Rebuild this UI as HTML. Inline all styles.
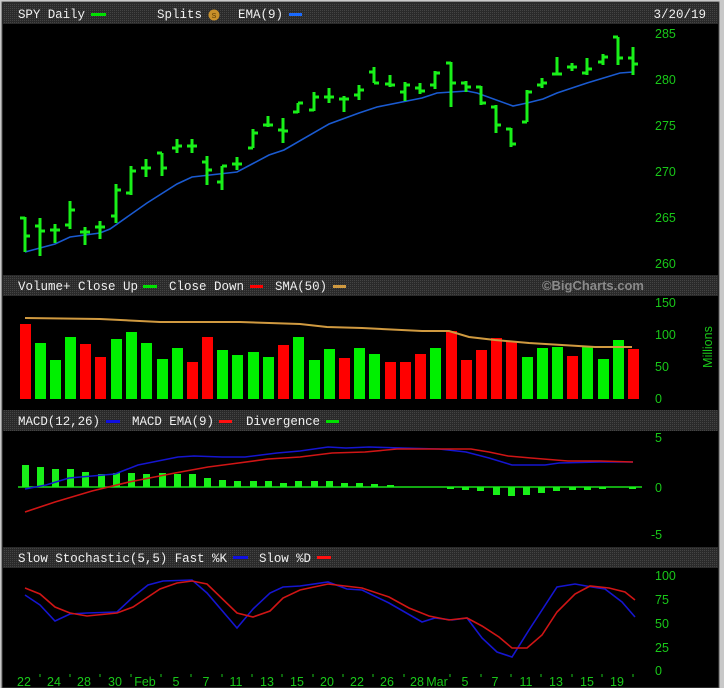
<!DOCTYPE html>
<html><head><meta charset="utf-8"><style>
html,body{margin:0;padding:0;background:#c8c8c8;width:724px;height:688px;overflow:hidden}
svg{display:block}
.h{font-family:"Liberation Mono",monospace;font-size:12.5px;fill:#f0f0f0}
.a{font-family:"Liberation Sans",sans-serif;font-size:12.5px;fill:#19c819}
</style></head><body>
<svg width="724" height="688" viewBox="0 0 724 688" xmlns="http://www.w3.org/2000/svg">
<defs><pattern id="dots" width="2" height="2" patternUnits="userSpaceOnUse"><rect width="2" height="2" fill="#2a2a2a"/><rect width="1" height="1" fill="#444"/></pattern></defs>
<rect x="0" y="0" width="724" height="688" fill="#c8c8c8"/>
<rect x="2" y="2" width="717" height="686" fill="#000"/>
<rect x="2" y="2" width="717" height="686" fill="none" stroke="#555" stroke-width="1"/>
<rect x="3" y="3" width="715" height="21" fill="url(#dots)"/>
<rect x="3" y="275" width="715" height="21" fill="url(#dots)"/>
<rect x="3" y="410" width="715" height="21" fill="url(#dots)"/>
<rect x="3" y="547" width="715" height="21" fill="url(#dots)"/>

<text class="h" x="18" y="18" textLength="67">SPY Daily</text>
<rect x="91" y="13" width="15" height="3" fill="#00e000"/>
<text class="h" x="157" y="18" textLength="45">Splits</text>
<circle cx="214" cy="15" r="5.5" fill="#c8902a"/>
<text x="214" y="18" font-family="Liberation Sans" font-size="7" fill="#5a3a00" text-anchor="middle">S</text>
<text class="h" x="238" y="18" textLength="45">EMA(9)</text>
<rect x="289" y="13" width="13" height="3" fill="#1a6aff"/>
<text class="h" x="706" y="18" text-anchor="end">3/20/19</text>

<text class="h" x="18" y="290" textLength="120">Volume+ Close Up</text>
<rect x="143" y="285" width="14" height="3" fill="#00e000"/>
<text class="h" x="169" y="290" textLength="75">Close Down</text>
<rect x="250" y="285" width="13" height="3" fill="#ff0000"/>
<text class="h" x="275" y="290" textLength="52">SMA(50)</text>
<rect x="333" y="285" width="13" height="3" fill="#d09a40"/>
<text x="644" y="290" text-anchor="end" font-family="Liberation Sans" font-weight="bold" font-size="13" fill="#8a8a8a">©BigCharts.com</text>

<text class="h" x="18" y="425" textLength="82">MACD(12,26)</text>
<rect x="106" y="420" width="14" height="3" fill="#1010e0"/>
<text class="h" x="132" y="425" textLength="82">MACD EMA(9)</text>
<rect x="219" y="420" width="13" height="3" fill="#ff1010"/>
<text class="h" x="246" y="425" textLength="74">Divergence</text>
<rect x="326" y="420" width="13" height="3" fill="#00e000"/>

<text class="h" x="18" y="562" textLength="209">Slow Stochastic(5,5) Fast %K</text>
<rect x="233" y="556" width="15" height="3" fill="#1010e0"/>
<text class="h" x="259" y="562" textLength="52">Slow %D</text>
<rect x="317" y="556" width="14" height="3" fill="#ff1010"/>

<text class="a" x="655" y="38">285</text>
<text class="a" x="655" y="84">280</text>
<text class="a" x="655" y="130">275</text>
<text class="a" x="655" y="176">270</text>
<text class="a" x="655" y="222">265</text>
<text class="a" x="655" y="268">260</text>

<polyline fill="none" stroke="#1a5ad0" stroke-width="1.6" points="25,252 55,244 70,237 100,233 110,229 147,203 177,184 192,177 237,172 269,155 284,150 329,124 359,113 377,107 422,98 437,93 467,91 477,93 513,106 527,103 543,99 557,93 587,83 620,73 633,72"/>
<g stroke="#19f019" stroke-width="3" fill="none">
<path d="M25 217V252M20 218H25M25 236H30"/>
<path d="M40 218V256M35 226H40M40 231H45"/>
<path d="M55 224V243M50 230H55M55 230H60"/>
<path d="M70 201V229M65 225H70M70 210H75"/>
<path d="M85 227V245M80 232H85M85 232H90"/>
<path d="M100 221V239M95 227H100M100 227H105"/>
<path d="M116 184V223M111 216H116M116 190H121"/>
<path d="M131 166V195M126 193H131M131 171H136"/>
<path d="M146 159V177M141 168H146M146 168H151"/>
<path d="M162 153V176M157 153H162M162 168H167"/>
<path d="M177 139V153M172 148H177M177 146H182"/>
<path d="M192 139V153M187 146H192M192 146H197"/>
<path d="M207 156V185M202 162H207M207 170H212"/>
<path d="M222 166V190M217 182H222M222 166H227"/>
<path d="M237 157V170M232 164H237M237 164H242"/>
<path d="M253 129V148M248 148H253M253 133H258"/>
<path d="M268 116V127M263 125H268M268 125H273"/>
<path d="M283 118V143M278 130H283M283 131H288"/>
<path d="M298 103V113M293 112H298M298 103H303"/>
<path d="M314 92V111M309 110H314M314 97H319"/>
<path d="M329 88V103M324 97H329M329 97H334"/>
<path d="M344 96V112M339 99H344M344 99H349"/>
<path d="M359 85V100M354 95H359M359 90H364"/>
<path d="M374 67V83M369 72H374M374 83H379"/>
<path d="M390 75V87M385 84H390M390 85H395"/>
<path d="M405 82V101M400 92H405M405 85H410"/>
<path d="M420 83V94M415 88H420M420 91H425"/>
<path d="M435 71V89M430 85H435M435 73H440"/>
<path d="M451 62V107M446 63H451M451 83H456"/>
<path d="M466 81V92M461 83H466M466 87H471"/>
<path d="M481 86V105M476 87H481M481 103H486"/>
<path d="M496 105V133M491 107H496M496 125H501"/>
<path d="M511 128V147M506 129H511M511 144H516"/>
<path d="M527 90V122M522 122H527M527 92H532"/>
<path d="M542 78V88M537 85H542M542 83H547"/>
<path d="M557 57V75M552 74H557M557 74H562"/>
<path d="M572 63V71M567 67H572M572 67H577"/>
<path d="M587 58V75M582 73H587M587 69H592"/>
<path d="M603 54V65M598 62H603M603 57H608"/>
<path d="M618 37V65M613 37H618M618 58H623"/>
<path d="M633 47V75M628 58H633M633 64H638"/>
</g>

<text class="a" x="655" y="307">150</text>
<text class="a" x="655" y="339">100</text>
<text class="a" x="655" y="371">50</text>
<text class="a" x="655" y="403">0</text>
<text class="a" transform="translate(712,347) rotate(-90)" text-anchor="middle" font-size="11.5">Millions</text>
<g>
<rect x="20" y="324" width="11" height="75" fill="#ff0000"/>
<rect x="35" y="343" width="11" height="56" fill="#00f000"/>
<rect x="50" y="360" width="11" height="39" fill="#00f000"/>
<rect x="65" y="337" width="11" height="62" fill="#00f000"/>
<rect x="80" y="344" width="11" height="55" fill="#ff0000"/>
<rect x="95" y="357" width="11" height="42" fill="#ff0000"/>
<rect x="111" y="339" width="11" height="60" fill="#00f000"/>
<rect x="126" y="332" width="11" height="67" fill="#00f000"/>
<rect x="141" y="343" width="11" height="56" fill="#00f000"/>
<rect x="157" y="359" width="11" height="40" fill="#00f000"/>
<rect x="172" y="348" width="11" height="51" fill="#00f000"/>
<rect x="187" y="362" width="11" height="37" fill="#ff0000"/>
<rect x="202" y="337" width="11" height="62" fill="#ff0000"/>
<rect x="217" y="350" width="11" height="49" fill="#00f000"/>
<rect x="232" y="355" width="11" height="44" fill="#00f000"/>
<rect x="248" y="352" width="11" height="47" fill="#00f000"/>
<rect x="263" y="357" width="11" height="42" fill="#00f000"/>
<rect x="278" y="345" width="11" height="54" fill="#ff0000"/>
<rect x="293" y="337" width="11" height="62" fill="#00f000"/>
<rect x="309" y="360" width="11" height="39" fill="#00f000"/>
<rect x="324" y="349" width="11" height="50" fill="#00f000"/>
<rect x="339" y="358" width="11" height="41" fill="#ff0000"/>
<rect x="354" y="348" width="11" height="51" fill="#00f000"/>
<rect x="369" y="354" width="11" height="45" fill="#00f000"/>
<rect x="385" y="362" width="11" height="37" fill="#ff0000"/>
<rect x="400" y="362" width="11" height="37" fill="#ff0000"/>
<rect x="415" y="354" width="11" height="45" fill="#ff0000"/>
<rect x="430" y="348" width="11" height="51" fill="#00f000"/>
<rect x="446" y="331" width="11" height="68" fill="#ff0000"/>
<rect x="461" y="360" width="11" height="39" fill="#ff0000"/>
<rect x="476" y="350" width="11" height="49" fill="#ff0000"/>
<rect x="491" y="338" width="11" height="61" fill="#ff0000"/>
<rect x="506" y="342" width="11" height="57" fill="#ff0000"/>
<rect x="522" y="357" width="11" height="42" fill="#00f000"/>
<rect x="537" y="348" width="11" height="51" fill="#00f000"/>
<rect x="552" y="347" width="11" height="52" fill="#00f000"/>
<rect x="567" y="356" width="11" height="43" fill="#ff0000"/>
<rect x="582" y="346" width="11" height="53" fill="#00f000"/>
<rect x="598" y="359" width="11" height="40" fill="#00f000"/>
<rect x="613" y="340" width="11" height="59" fill="#00f000"/>
<rect x="628" y="349" width="11" height="50" fill="#ff0000"/>
</g>
<polyline fill="none" stroke="#d09a40" stroke-width="2" points="25,318 100,319 160,322 240,322 300,324 327,327 362,328 422,331 449,331 469,337 495,340 529,343 562,345 595,347 632,347"/>

<text class="a" x="655" y="442">5</text>
<text class="a" x="655" y="492">0</text>
<text class="a" x="651" y="539">-5</text>
<line x1="18" y1="487" x2="642" y2="487" stroke="#19e019" stroke-width="1.5"/>
<g fill="#19f019">
<rect x="22" y="465" width="7" height="22"/><rect x="37" y="467" width="7" height="20"/><rect x="52" y="469" width="7" height="18"/><rect x="67" y="469" width="7" height="18"/><rect x="82" y="472" width="7" height="15"/><rect x="98" y="474" width="7" height="13"/><rect x="113" y="473" width="7" height="14"/><rect x="128" y="473" width="7" height="14"/><rect x="143" y="474" width="7" height="13"/><rect x="159" y="473" width="7" height="14"/><rect x="174" y="474" width="7" height="13"/><rect x="189" y="474" width="7" height="13"/><rect x="204" y="478" width="7" height="9"/><rect x="219" y="480" width="7" height="7"/><rect x="234" y="481" width="7" height="6"/><rect x="250" y="481" width="7" height="6"/><rect x="265" y="481" width="7" height="6"/><rect x="280" y="483" width="7" height="4"/><rect x="295" y="481" width="7" height="6"/><rect x="311" y="481" width="7" height="6"/><rect x="326" y="481" width="7" height="6"/><rect x="341" y="483" width="7" height="4"/><rect x="356" y="483" width="7" height="4"/><rect x="371" y="484" width="7" height="3"/><rect x="387" y="485" width="7" height="2"/>
<rect x="447" y="487" width="7" height="2"/><rect x="462" y="487" width="7" height="3"/><rect x="477" y="487" width="7" height="4"/><rect x="493" y="487" width="7" height="8"/><rect x="508" y="487" width="7" height="9"/><rect x="523" y="487" width="7" height="8"/><rect x="538" y="487" width="7" height="6"/><rect x="553" y="487" width="7" height="4"/><rect x="569" y="487" width="7" height="3"/><rect x="584" y="487" width="7" height="3"/><rect x="599" y="487" width="7" height="2"/><rect x="629" y="487" width="7" height="2"/>
</g>
<polyline fill="none" stroke="#1515d0" stroke-width="1.6" points="25,489 46,485 69,478 92,476 115,474 138,465 178,457 194,456 222,457 245,457 277,453 300,451 328,447 346,448 369,447 402,448 439,449 466,452 489,458 512,465 545,465 559,463 600,462 633,462"/>
<polyline fill="none" stroke="#d01515" stroke-width="1.6" points="25,512 55,502 92,491 129,482 175,473 208,467 231,464 268,459 300,457 332,453 365,452 397,449 439,449 471,449 489,452 508,456 531,458 568,461 600,461 633,462"/>

<text class="a" x="655" y="580">100</text>
<text class="a" x="655" y="604">75</text>
<text class="a" x="655" y="628">50</text>
<text class="a" x="655" y="652">25</text>
<text class="a" x="655" y="675">0</text>
<polyline fill="none" stroke="#1515d0" stroke-width="1.6" points="25,595 40,605 55,621 70,614 87,613 117,612 133,597 148,585 163,581 192,580 207,593 237,628 253,609 270,593 283,587 300,586 328,582 347,589 362,590 389,603 422,622 435,618 452,620 467,618 482,638 497,652 512,657 529,630 557,587 575,584 592,587 605,589 622,602 635,617"/>
<polyline fill="none" stroke="#d01515" stroke-width="1.6" points="25,588 40,594 55,607 70,613 87,616 117,613 133,607 160,589 177,583 192,581 207,584 237,613 253,617 270,611 283,598 300,590 328,584 362,588 389,597 409,608 429,616 449,620 467,618 482,626 499,637 512,648 527,648 542,635 557,612 575,594 590,586 609,588 625,592 635,600"/>

<g text-anchor="middle" font-family="Liberation Sans" font-size="12.5" fill="#19c819">
<text x="24" y="686">22</text><text x="54" y="686">24</text><text x="84" y="686">28</text><text x="115" y="686">30</text><text x="145" y="686">Feb</text><text x="176" y="686">5</text><text x="206" y="686">7</text><text x="236" y="686">11</text><text x="267" y="686">13</text><text x="297" y="686">15</text><text x="327" y="686">20</text><text x="357" y="686">22</text><text x="387" y="686">26</text><text x="417" y="686">28</text><text x="437" y="686">Mar</text><text x="465" y="686">5</text><text x="495" y="686">7</text><text x="526" y="686">11</text><text x="556" y="686">13</text><text x="587" y="686">15</text><text x="617" y="686">19</text>
</g>
<path stroke="#19c819" stroke-width="1" d="M40 674v3M70 674v3M100 674v3M131 674v3M161 674v3M191 674v3M222 674v3M252 674v3M282 674v3M313 674v3M343 674v3M373 674v3M404 674v3M450 674v3M481 674v3M511 674v3M541 674v3M572 674v3M602 674v3M633 674v3"/>
</svg>
</body></html>
